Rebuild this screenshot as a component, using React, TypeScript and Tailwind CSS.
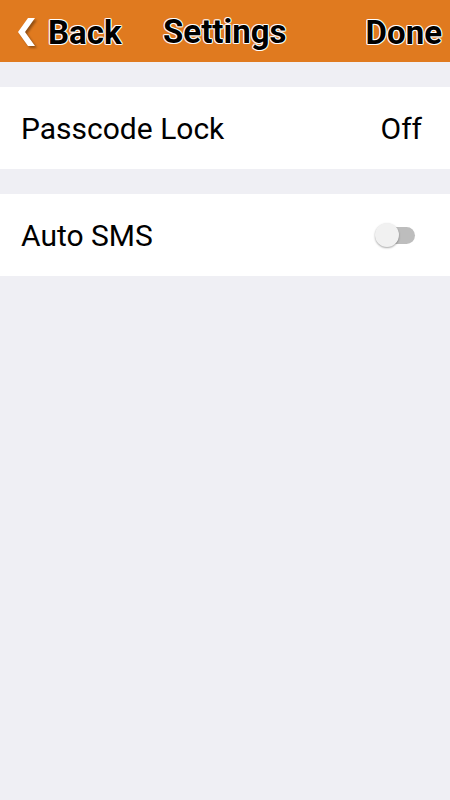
import React from "react";

const outline = {
  textShadow:
    "1px 0 0 #fff, -1px 0 0 #fff, 0 1px 0 #fff, 0 -1px 0 #fff, 1px 1px 0 rgba(255,255,255,0.6), -1px -1px 0 rgba(255,255,255,0.6), 1px -1px 0 rgba(255,255,255,0.6), -1px 1px 0 rgba(255,255,255,0.6)",
};

export default function App() {
  return (
    <div className="w-[450px] h-[800px] bg-[#efeff4] font-['Roboto',sans-serif]">
      <div className="h-[62px] bg-[#e07a1f] flex items-center justify-between pl-[16px] pr-[8px] relative">
        <div className="flex items-center gap-[10px] pt-[2px]">
          <svg width="22" height="30" viewBox="0 0 22 30" className="drop-shadow-[2px_2px_1px_rgba(0,0,0,0.35)]">
            <path d="M12 1 L19 1 L9 15 L19 29 L12 29 L2 15 Z" fill="#fff" />
          </svg>
          <span className="text-[33px] font-bold text-black leading-none" style={outline}>
            Back
          </span>
        </div>
        <span className="absolute left-[163px] top-[15px] text-[33px] font-bold text-black leading-none" style={outline}>
          Settings
        </span>
        <span className="text-[33px] font-bold text-black leading-none pt-[2px]" style={outline}>
          Done
        </span>
      </div>
      <div className="h-[25px]" />
      <div className="h-[82px] bg-white flex items-center justify-between pl-[21px] pr-[28px]">
        <span className="text-[30px] text-black leading-none pt-[2px]">Passcode Lock</span>
        <span className="text-[30px] text-black leading-none pt-[2px]">Off</span>
      </div>
      <div className="h-[25px]" />
      <div className="h-[82px] bg-white flex items-center justify-between pl-[21px] pr-[35px]">
        <span className="text-[30px] text-black leading-none pt-[2px]">Auto SMS</span>
        <div className="relative w-[40px] h-[24px] flex items-center">
          <div className="absolute left-[4px] right-0 h-[17px] rounded-full bg-[#bdbdbd]" />
          <div className="absolute left-0 w-[24px] h-[24px] rounded-full bg-[#f1f1f1] shadow-[0_1px_2px_rgba(0,0,0,0.35)]" />
        </div>
      </div>
    </div>
  );
}
